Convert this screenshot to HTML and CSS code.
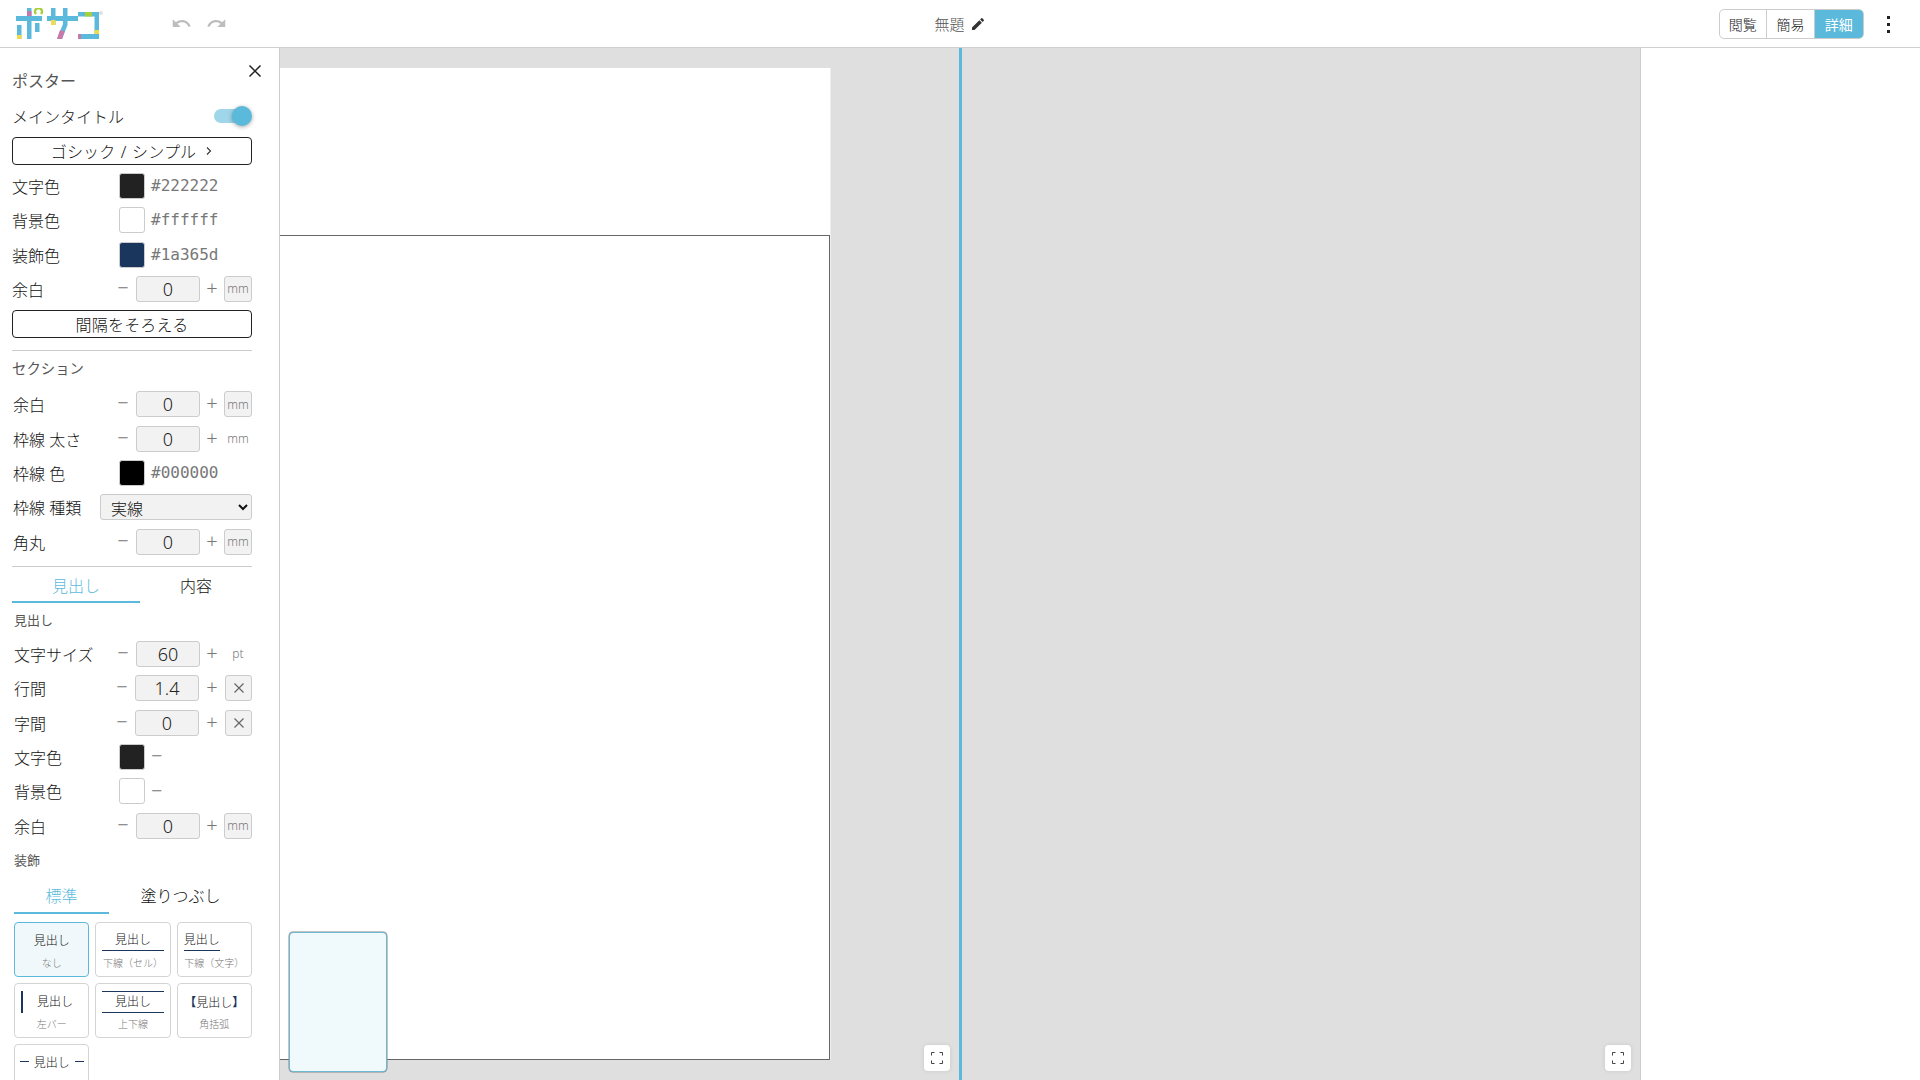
FILE: index.html
```html
<!DOCTYPE html>
<html lang="ja">
<head>
<meta charset="utf-8">
<title>ポサコ</title>
<link rel="stylesheet" href="styles.css">
</head>
<body>
<header class="topbar">
  <div class="top-left">
    <svg class="logo" width="90" height="34" viewBox="0 0 90 34" aria-label="ポサコ">
      <g fill="#5bbadb">
        <rect x="0" y="8" width="26" height="5"/>
        <rect x="11" y="0" width="4.5" height="31"/>
        <path d="M1 17h4.500v14H1z"/>
        <path d="M19 15h4.500v9H19z"/>
        <rect x="31" y="8" width="31" height="5"/>
        <rect x="35" y="0" width="4.500" height="17"/>
        <path d="M47 0h4.500v17L46 31h-5l6-15z"/>
        <rect x="62" y="4" width="21" height="4.500"/>
        <rect x="78.500" y="4" width="4.500" height="27"/>
        <rect x="62" y="26" width="21" height="5"/>
      </g>
      <rect x="11" y="3" width="4.500" height="5" fill="#c978ac"/>
      <rect x="1" y="27" width="4.500" height="4" fill="#efdc4c"/>
      <path d="M20 6a3.500 3.500 0 1 1 5 0" fill="none" stroke="#a6cf3b" stroke-width="2.500"/>
      <rect x="35" y="12" width="4.500" height="5" fill="#efdc4c"/>
      <path d="M44 22l4.700 1.500-2.700 7.500h-5z" fill="#c978ac"/>
      <rect x="69" y="4" width="7" height="4.500" fill="#a6cf3b"/>
      <rect x="78.500" y="22" width="4.500" height="4" fill="#efdc4c"/>
      <rect x="62" y="26" width="3" height="5" fill="#c978ac"/>
      <circle cx="85" cy="5" r="1.300" fill="none" stroke="#bbb" stroke-width="0.700"/>
    </svg>
    <svg class="hist" width="21" height="21" viewBox="0 0 24 24"><path d="M12.500 8c-2.650 0-5.050.99-6.900 2.600L2 7v9h9l-3.620-3.620c1.390-1.160 3.160-1.880 5.120-1.880 3.540 0 6.550 2.310 7.600 5.500l2.370-.78C21.080 11.030 17.150 8 12.500 8z"/></svg>
    <svg class="hist" width="21" height="21" viewBox="0 0 24 24"><path d="M18.400 10.600C16.550 8.990 14.150 8 11.500 8c-4.650 0-8.580 3.030-9.960 7.220L3.900 16c1.050-3.190 4.050-5.500 7.600-5.500 1.950 0 3.730.72 5.120 1.880L13 16h9V7l-3.600 3.600z"/></svg>
  </div>
  <div class="top-title">
    <span>無題</span>
    <svg width="16" height="16" viewBox="0 0 24 24" fill="#333"><path d="M3 17.250V21h3.750L17.810 9.940l-3.750-3.750L3 17.250zM20.710 7.040c.39-.39.39-1.020 0-1.410l-2.340-2.340c-.39-.39-1.020-.39-1.410 0l-1.830 1.830 3.750 3.750 1.830-1.830z"/></svg>
  </div>
  <div class="top-right">
    <div class="modes">
      <span class="mode">閲覧</span>
      <span class="mode">簡易</span>
      <span class="mode mode-on">詳細</span>
    </div>
    <div class="more"><i></i><i></i><i></i></div>
  </div>
</header>

<div class="workspace">
  <aside class="sidebar">
    <svg class="close" width="20" height="20" viewBox="0 0 20 20"><path d="M4.500 4.500l11 11M15.500 4.500l-11 11" stroke="#222" stroke-width="1.500" fill="none"/></svg>
    <div class="panel-title">ポスター</div>
    <div class="row">
      <span class="label">メインタイトル</span>
      <span class="toggle"><i class="knob"></i></span>
    </div>
    <button class="wide first">ゴシック / シンプル
      <svg width="8" height="10" viewBox="0 0 8 10"><path d="M2 1.500L5.500 5 2 8.500" fill="none" stroke="#333" stroke-width="1.100"/></svg>
    </button>

    <div class="row row-first"><span class="label">文字色</span><span class="swatch c-dark"></span><span class="hex">#222222</span></div>
    <div class="row"><span class="label">背景色</span><span class="swatch c-white"></span><span class="hex">#ffffff</span></div>
    <div class="row"><span class="label">装飾色</span><span class="swatch c-navy"></span><span class="hex">#1a365d</span></div>
    <div class="row">
      <span class="label">余白</span>
      <span class="step">−</span><input class="num" value="0"><span class="step">+</span><span class="unit boxed">mm</span>
    </div>
    <button class="wide second">間隔をそろえる</button>
    <hr class="rule rule-a">
    <div class="heading">セクション</div>
    <div class="row indent1">
      <span class="label">余白</span>
      <span class="step">−</span><input class="num" value="0"><span class="step">+</span><span class="unit boxed">mm</span>
    </div>
    <div class="row indent1">
      <span class="label">枠線 太さ</span>
      <span class="step">−</span><input class="num" value="0"><span class="step">+</span><span class="unit">mm</span>
    </div>
    <div class="row indent1"><span class="label">枠線 色</span><span class="swatch c-black"></span><span class="hex">#000000</span></div>
    <div class="row indent1">
      <span class="label label-short">枠線 種類</span>
      <select class="pick"><option>実線</option></select>
    </div>
    <div class="row indent1">
      <span class="label">角丸</span>
      <span class="step">−</span><input class="num" value="0"><span class="step">+</span><span class="unit boxed">mm</span>
    </div>
    <hr class="rule rule-b">
    <div class="tabs tabs-a">
      <span class="tab tab-on">見出し</span>
      <span class="tab">内容</span>
    </div>
    <div class="sub">見出し</div>
    <div class="indent2">
      <div class="row">
        <span class="label">文字サイズ</span>
        <span class="step">−</span><input class="num" value="60"><span class="step">+</span><span class="unit">pt</span>
      </div>
      <div class="row">
        <span class="label">行間</span>
        <span class="step">−</span><input class="num" value="1.4"><span class="step step-wide">+</span><span class="unit boxed clear"><svg width="12" height="12" viewBox="0 0 12 12"><path d="M1.500 1.500l9 9M10.500 1.500l-9 9" stroke="#666" stroke-width="1.200"/></svg></span>
      </div>
      <div class="row">
        <span class="label">字間</span>
        <span class="step">−</span><input class="num" value="0"><span class="step step-wide">+</span><span class="unit boxed clear"><svg width="12" height="12" viewBox="0 0 12 12"><path d="M1.500 1.500l9 9M10.500 1.500l-9 9" stroke="#666" stroke-width="1.200"/></svg></span>
      </div>
      <div class="row"><span class="label">文字色</span><span class="swatch c-dark"></span><span class="dash">−</span></div>
      <div class="row"><span class="label">背景色</span><span class="swatch c-white"></span><span class="dash">−</span></div>
      <div class="row">
        <span class="label">余白</span>
        <span class="step">−</span><input class="num" value="0"><span class="step">+</span><span class="unit boxed">mm</span>
      </div>
    </div>
    <div class="sub">装飾</div>
    <div class="indent2">
      <div class="tabs tabs-b">
        <span class="tab tab-on">標準</span>
        <span class="tab">塗りつぶし</span>
      </div>
      <div class="cards">
        <div class="card card-on"><div class="sample"><span>見出し</span></div><div class="desc">なし</div></div>
        <div class="card"><div class="sample s-under"><span>見出し</span></div><div class="desc">下線（セル）</div></div>
        <div class="card"><div class="sample s-under-text"><span>見出し</span></div><div class="desc">下線（文字）</div></div>
        <div class="card"><div class="sample s-bar"><span>見出し</span></div><div class="desc">左バー</div></div>
        <div class="card"><div class="sample s-both"><span>見出し</span></div><div class="desc">上下線</div></div>
        <div class="card"><div class="sample s-bracket"><span><b>【</b>見出し<b>】</b></span></div><div class="desc">角括弧</div></div>
        <div class="card"><div class="sample s-lines"><span>見出し</span></div></div>
      </div>
    </div>
  </aside>

  <main class="pane pane-left">
    <div class="poster">
      <div class="section"></div>
    </div>
    <div class="thumb"></div>
    <div class="expand"><svg width="12" height="12" viewBox="0 0 12 12"><path d="M.5 3.500V.5h3M8.500.5h3v3M11.500 8.500v3h-3M3.500 11.500h-3v-3" fill="none" stroke="#444" stroke-width="1"/></svg></div>
  </main>
  <div class="split"></div>
  <section class="pane pane-right">
    <div class="expand"><svg width="12" height="12" viewBox="0 0 12 12"><path d="M.5 3.500V.5h3M8.500.5h3v3M11.500 8.500v3h-3M3.500 11.500h-3v-3" fill="none" stroke="#444" stroke-width="1"/></svg></div>
  </section>
  <aside class="inspector"></aside>
</div>
</body>
</html>
```
FILE: styles.css
```css
* { box-sizing: border-box; }
html, body { margin: 0; height: 100%; }
body {
  width: 1920px;
  height: 1080px;
  overflow: hidden;
  display: flex;
  flex-direction: column;
  background: #fff;
  color: #222;
  font-family: "Noto Sans", "Noto Sans CJK JP", sans-serif;
  font-weight: 300;
}

/* top bar */
.topbar {
  height: 48px;
  flex: none;
  display: grid;
  grid-template-columns: 1fr auto 1fr;
  align-items: center;
  border-bottom: 1px solid #d0d0d0;
  background: #fff;
}
.top-left { display: flex; align-items: center; padding-left: 16px; }
.logo { display: block; margin-right: 65px; margin-top: 3px; }
.hist { fill: #bdbdbd; margin-right: 14px; }
.top-title { display: flex; align-items: center; gap: 5px; font-size: 15px; color: #555; }
.top-right { display: flex; align-items: center; justify-content: flex-end; }
.modes {
  display: flex;
  height: 30px;
  border: 1px solid #ccc;
  border-radius: 5px;
  overflow: hidden;
  margin-right: 23.500px;
}
.mode {
  width: 47.670px;
  display: flex;
  align-items: center;
  justify-content: center;
  font-size: 14px;
  color: #222;
  border-right: 1px solid #ccc;
}
.mode:last-child { border-right: 0; }
.mode-on { background: #5bbadb; color: #fff; font-weight: 400; }
.more { width: 3px; margin: 2px 30px 0 0; display: flex; flex-direction: column; gap: 4px; }
.more i { display: block; width: 3px; height: 3px; background: #222; }

/* workspace */
.workspace { flex: 1; min-height: 0; display: flex; }
.sidebar {
  position: relative;
  width: 280px;
  flex: none;
  height: 1032px;
  overflow: hidden;
  border-right: 1px solid #ccc;
  padding: 18px 27px 0 12px;
  font-size: 16px;
}
.close { position: absolute; top: 13px; left: 245px; }
.panel-title { height: 30px; line-height: 30px; font-size: 16px; font-weight: 400; color: #555; margin-bottom: 3px; }
.row { height: 34.330px; display: flex; align-items: center; }
.row-first { margin-top: 3.500px; }
.label { flex: 1; font-size: 16px; color: #111; white-space: nowrap; }
.label-short { flex: none; width: 88px; }
.indent1 .label { padding-left: 1px; }
.indent2 { margin-left: 2px; }

.toggle { position: relative; width: 36px; height: 14px; border-radius: 7px; background: #9fd6e9; margin-right: 2px; }
.knob {
  position: absolute;
  top: -3px;
  right: -2px;
  width: 20px;
  height: 20px;
  border-radius: 50%;
  background: #5bbadb;
  box-shadow: 0 1px 4px rgba(0,0,0,.35);
}
.wide {
  display: flex;
  align-items: center;
  justify-content: center;
  gap: 9px;
  width: 240px;
  height: 28px;
  padding: 0;
  background: #fff;
  border: 1px solid #222;
  border-radius: 4px;
  font-family: inherit;
  font-weight: inherit;
  font-size: 16px;
  letter-spacing: .2px;
  word-spacing: 1px;
  color: #111;
}
.first { margin-top: 4px; }
.second { margin-top: 4px; }

.swatch { width: 26px; height: 26px; flex: none; border-radius: 3px; border: 1px solid #ccc; margin-right: 6px; }
.hex { width: 101px; font-family: "DejaVu Sans Mono", monospace; font-weight: 400; font-size: 16px; color: #777; margin-top: -1px; }
.dash { width: 101px; font-size: 20px; color: #777; margin-top: -2px; }
.c-dark { background: #222; }
.c-white { background: #fff; }
.c-navy { background: #1a365d; }
.c-black { background: #000; }

.step { width: 26px; flex: none; text-align: center; font-size: 20px; color: #777; line-height: 26px; margin-top: -2px; }
.num {
  width: 64px;
  height: 26px;
  flex: none;
  padding: 0;
  text-align: center;
  border: 1px solid #ccc;
  border-radius: 3px;
  background: #f2f2f2;
  font-family: inherit;
  font-weight: inherit;
  font-size: 18px;
  color: #222;
}
.num + .step { width: 24px; }
.num + .step-wide { width: 26px; }
.unit { width: 28px; height: 26px; flex: none; display: flex; align-items: center; justify-content: center; font-size: 12px; color: #777; }
.boxed { border: 1px solid #ccc; border-radius: 3px; background: #f2f2f2; }
.clear { width: 27px; }

.pick {
  width: 152px;
  height: 26px;
  flex: none;
  padding: 2px 0 0 6px;
  border: 1px solid #ccc;
  border-radius: 3px;
  background-color: #f2f2f2;
  font-family: inherit;
  font-weight: inherit;
  font-size: 16px;
  color: #111;
}

.rule { width: 240px; height: 1px; margin: 0; border: 0; background: #ccc; }
.rule-a { margin-top: 12px; }
.rule-b { margin-top: 7px; }
.heading { height: 36px; line-height: 36px; font-size: 14.400px; font-weight: 400; color: #555; }
.sub { height: 34px; line-height: 34px; padding-left: 2px; font-size: 13px; font-weight: 400; color: #555; }

.tabs { display: grid; }
.tabs-a { grid-template-columns: 128px 112px; height: 36px; }
.tabs-b { grid-template-columns: 95px 143px; height: 37px; }
.tab { display: flex; align-items: center; justify-content: center; padding-top: 2px; font-size: 16px; color: #111; border-bottom: 2px solid transparent; }
.tab-on { color: #5bbadb; border-bottom-color: #5bbadb; }

.cards { display: grid; grid-template-columns: repeat(3, 1fr); grid-auto-rows: 55px; gap: 6px; margin-top: 8px; }
.card {
  display: flex;
  flex-direction: column;
  align-items: center;
  border: 1px solid #d4d4d4;
  border-radius: 4px;
  background: #fff;
  overflow: hidden;
}
.card-on { background: #f0f8fb; border-color: #5bbadb; }
.sample { height: 34px; flex: none; width: 100%; display: flex; align-items: center; justify-content: center; font-size: 12px; color: #111; }
.sample b { font-weight: 700; color: #1a365d; }
.desc { font-size: 10px; line-height: 12px; color: #777; white-space: nowrap; }
.s-under span { display: block; width: 62px; text-align: center; border-bottom: 1.500px solid #1a365d; margin-top: 2px; padding-bottom: 2px; }
.s-under-text { justify-content: flex-start; padding-left: 6px; }
.s-under-text span { border-bottom: 1.500px solid #1a365d; margin-top: 2px; padding-bottom: 2px; }
.s-bar { justify-content: flex-start; padding-left: 6px; }
.s-bar span { border-left: 2px solid #1a365d; padding: 3px 0 3px 14px; line-height: 16px; margin-top: 2px; }
.s-both span { display: block; width: 62px; text-align: center; border-top: 1.500px solid #1a365d; border-bottom: 1.500px solid #1a365d; padding: 2px 0; line-height: 16px; margin-top: 2px; }
.s-bracket span { margin-top: 2px; }
.s-lines { gap: 5px; }
.s-lines::before, .s-lines::after { content: ""; width: 9px; height: 1px; background: #1a365d; }

/* canvas */
.pane { position: relative; background: #dfdfdf; overflow: hidden; height: 1032px; }
.pane-left { width: 679px; flex: none; }
.split { width: 3px; flex: none; background: #5bbadb; }
.pane-right { width: 678px; flex: none; }
.inspector { flex: 1; background: #fff; border-left: 1px solid #ccc; }
.poster { width: 550px; height: 992px; margin-top: 19.500px; background: #fff; padding-top: 167px; box-shadow: 1px 0 0 #eee; }
.section { width: 550px; height: 825px; border: 1px solid #666; border-left: 0; }
.thumb {
  position: absolute;
  left: 8.500px;
  top: 883.500px;
  width: 98px;
  height: 140px;
  background: #f0f9fb;
  border: 1.500px solid #6db8d2;
  border-radius: 4px;
  box-shadow: 0 0 0 .5px #888;
}
.expand {
  position: absolute;
  right: 9px;
  bottom: 9px;
  width: 26px;
  height: 26px;
  border-radius: 4px;
  background: #fff;
  display: flex;
  align-items: center;
  justify-content: center;
  box-shadow: 0 0 4px rgba(0,0,0,.1);
}
```
